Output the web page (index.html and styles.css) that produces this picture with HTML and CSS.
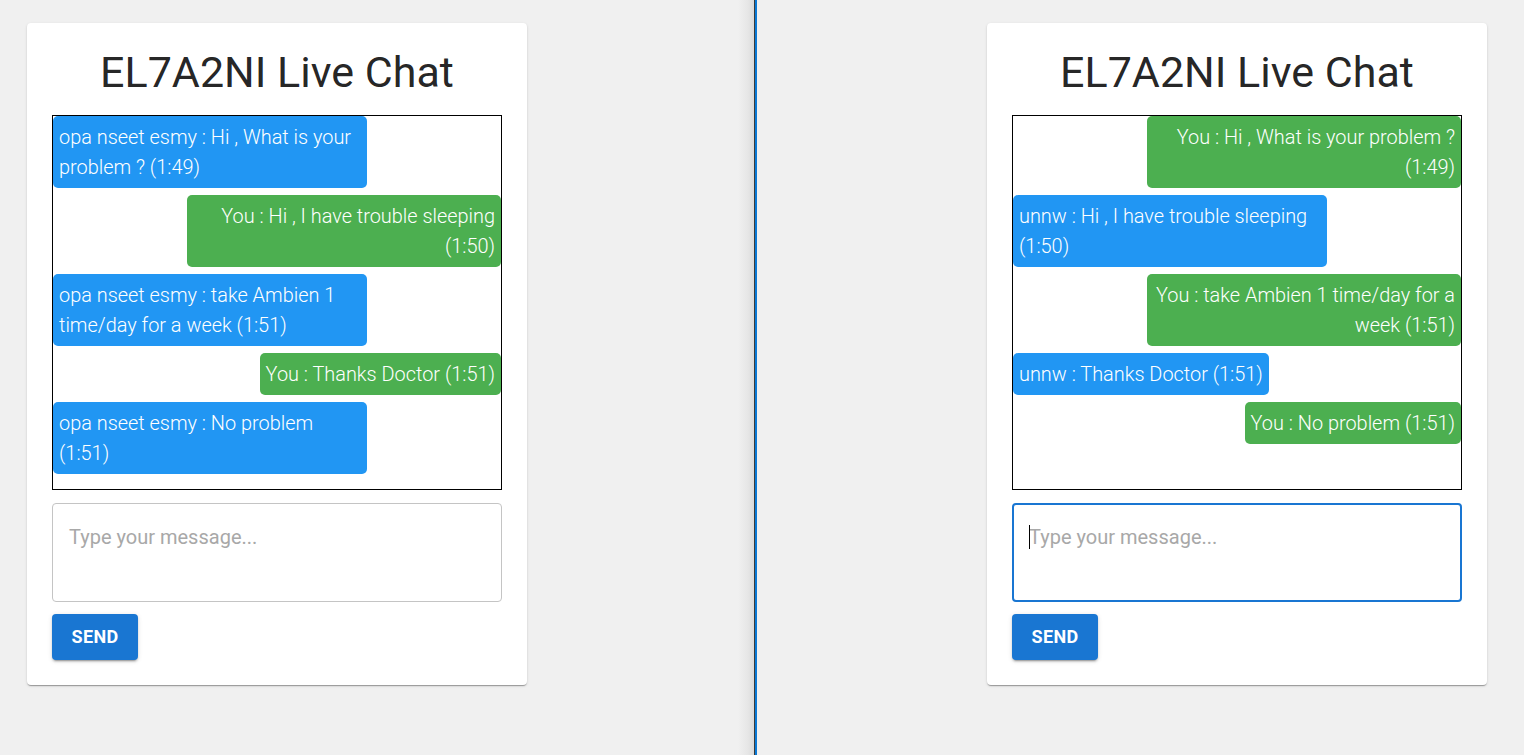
FILE: index.html
```html
<!DOCTYPE html>
<html>
<head>
<meta charset="utf-8">
<link rel="stylesheet" href="styles.css">
</head>
<body>
<div class="screen">
  <div class="pane pane-left">
    <div class="card">
      <h1 class="title">EL7A2NI Live Chat</h1>
      <div class="chatbox">
        <div class="msg other">opa nseet esmy : Hi , What is your problem ? (1:49)</div>
        <div class="msg mine">You : Hi , I have trouble sleeping (1:50)</div>
        <div class="msg other">opa nseet esmy : take Ambien 1 time/day for a week (1:51)</div>
        <div class="msg mine">You : Thanks Doctor (1:51)</div>
        <div class="msg other">opa nseet esmy : No problem (1:51)</div>
      </div>
      <div class="input">
        <textarea class="field" placeholder="Type your message..."></textarea>
      </div>
      <button class="send">SEND</button>
    </div>
  </div>
  <div class="divider"></div>
  <div class="pane pane-right">
    <div class="card">
      <h1 class="title">EL7A2NI Live Chat</h1>
      <div class="chatbox">
        <div class="msg mine">You : Hi , What is your problem ? (1:49)</div>
        <div class="msg other">unnw : Hi , I have trouble sleeping (1:50)</div>
        <div class="msg mine">You : take Ambien 1 time/day for a week (1:51)</div>
        <div class="msg other">unnw : Thanks Doctor (1:51)</div>
        <div class="msg mine">You : No problem (1:51)</div>
      </div>
      <div class="input focused">
        <span class="caret"></span>
        <textarea class="field" placeholder="Type your message..."></textarea>
      </div>
      <button class="send">SEND</button>
    </div>
  </div>
</div>
</body>
</html>
```

FILE: styles.css
```css
* { box-sizing: border-box; }
html, body {
  margin: 0;
  padding: 0;
  width: 1524px;
  height: 755px;
  overflow: hidden;
  background: #f0f0f0;
  font-family: Roboto, "Liberation Sans", sans-serif;
}
.screen {
  display: flex;
  height: 755px;
}
.pane {
  height: 755px;
  padding-top: 23px;
}
.pane-left {
  width: 754px;
  padding-left: 27px;
  background: linear-gradient(to right, #f0f0f0 0, #f0f0f0 738px, #e6e6e6 748px, #d9d9d9 754px);
}
.divider {
  width: 3px;
  height: 755px;
  background: linear-gradient(to right, #3a3a3a 0, #3a3a3a 1px, #0a78d4 1px, #0a78d4 3px);
}
.pane-right {
  flex: 1;
  padding-left: 230px;
}
.card {
  width: 500px;
  background: #fff;
  border-radius: 4px;
  box-shadow: 0 2px 1px -1px rgba(0,0,0,0.2), 0 1px 1px 0 rgba(0,0,0,0.14), 0 1px 3px 0 rgba(0,0,0,0.12);
  padding: 25px 25px 25px;
  display: flex;
  flex-direction: column;
  align-items: flex-start;
}
.title {
  align-self: stretch;
  margin: 0 0 18px;
  text-align: center;
  font-weight: 400;
  font-size: 43px;
  line-height: 49px;
  color: rgba(0,0,0,0.87);
}
.chatbox {
  align-self: stretch;
  height: 375px;
  border: 1px solid #000;
  display: flex;
  flex-direction: column;
  gap: 7px;
  overflow: hidden;
}
.msg {
  max-width: 70%;
  padding: 7px 6px 5px 6px;
  border-radius: 5px;
  color: #fff;
  font-size: 19.9px;
  font-weight: 300;
  line-height: 30px;
}
.msg.other {
  align-self: flex-start;
  background: #2196f3;
  text-align: left;
}
.msg.mine {
  align-self: flex-end;
  background: #4caf50;
  text-align: right;
}
.input {
  position: relative;
  align-self: stretch;
  margin-top: 13px;
  height: 99px;
  border: 1px solid #c4c4c4;
  border-radius: 4px;
}
.input.focused {
  border: 2px solid #1976d2;
}
.field {
  display: block;
  width: 100%;
  height: 100%;
  border: none;
  outline: none;
  resize: none;
  background: transparent;
  padding: 18px 16px;
  font-family: Roboto, "Liberation Sans", sans-serif;
  font-size: 20px;
  line-height: 30px;
  color: #222;
}
.input.focused .field {
  padding: 17px 15px;
}
.field::placeholder {
  color: #a8a8a8;
}
.caret {
  position: absolute;
  left: 15px;
  top: 20px;
  width: 1px;
  height: 24px;
  background: #000;
}
.send {
  margin-top: 12px;
  width: 86px;
  height: 46px;
  border: none;
  border-radius: 4px;
  background: #1976d2;
  color: #fff;
  font-family: Roboto, "Liberation Sans", sans-serif;
  font-size: 18px;
  font-weight: 700;
  letter-spacing: 0.3px;
  box-shadow: 0 3px 1px -2px rgba(0,0,0,0.2), 0 2px 2px 0 rgba(0,0,0,0.14), 0 1px 5px 0 rgba(0,0,0,0.12);
  padding: 0;
  padding-bottom: 2px;
}
```
